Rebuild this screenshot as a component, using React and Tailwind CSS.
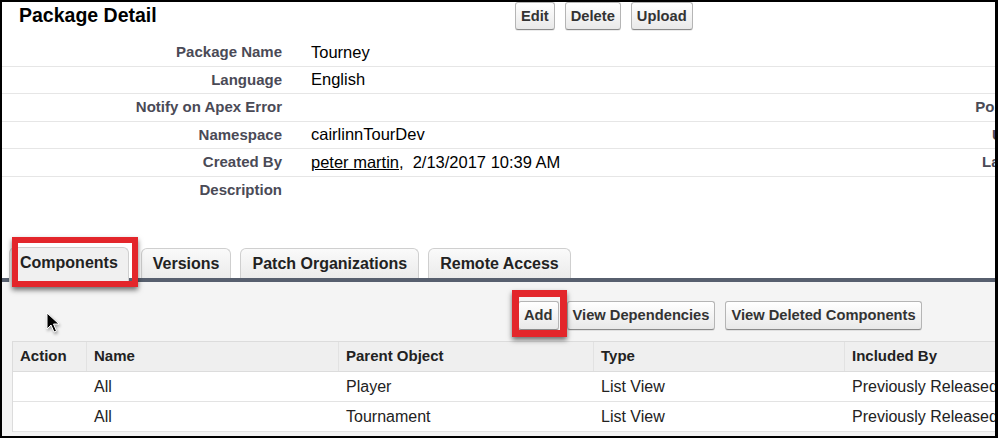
import React from "react";

const btn =
  "h-[28px] px-[5px] border border-[#b5b5b5] border-b-[#8a8a8a] rounded-[3px] bg-linear-to-b from-white to-[#e9e9e9] text-[14.7px] font-bold text-[#333] flex items-center whitespace-nowrap shadow-[0_1px_0_rgba(0,0,0,0.08)]";

const tab =
  "h-[30px] px-[10px] border border-b-0 border-[#cfcfcf] rounded-t-[6px] bg-linear-to-b from-[#fafafa] to-[#ebebeb] text-[16px] font-bold text-[#222] flex items-center whitespace-nowrap";

function Row({ label, value, right, last }) {
  return (
    <div
      className={`flex items-center h-[27.5px] overflow-hidden shrink-0 ${
        last ? "" : "border-b border-[#e6e6e6]"
      }`}
    >
      <div className="w-[280px] shrink-0 text-right text-[15px] font-bold text-[#4a4a56] whitespace-nowrap">
        {label}
      </div>
      <div className="w-[618px] shrink-0 pl-[29px] text-[16.5px] text-black whitespace-nowrap">
        {value}
      </div>
      <div className="w-[202px] shrink-0 text-right text-[15px] font-bold text-[#4a4a56] whitespace-nowrap">
        {right}
      </div>
    </div>
  );
}

export default function App() {
  const rows = [
    { label: "Package Name", value: "Tourney" },
    { label: "Language", value: "English" },
    { label: "Notify on Apex Error", value: "", right: "Post Install Script" },
    { label: "Namespace", value: "cairlinnTourDev", right: "Uninstall Script" },
    {
      label: "Created By",
      value: (
        <span>
          <span className="underline">peter martin</span>,
          <span className="ml-[9px]">2/13/2017 10:39 AM</span>
        </span>
      ),
      right: "Last Modified By",
    },
    { label: "Description", value: "" },
  ];

  const cols = [
    { name: "Action", w: "w-[73px]" },
    { name: "Name", w: "w-[252px]" },
    { name: "Parent Object", w: "w-[255px]" },
    { name: "Type", w: "w-[251px]" },
    { name: "Included By", w: "w-[200px]" },
  ];
  const data = [
    ["", "All", "Player", "List View", "Previously Released"],
    ["", "All", "Tournament", "List View", "Previously Released"],
  ];

  return (
    <div className="w-[1000px] h-[439px] bg-white relative overflow-hidden font-['Liberation_Sans',Arial,sans-serif]">
      <div className="w-[998px] h-[438px] border-2 border-r-[3px] border-black flex flex-col overflow-hidden">
        {/* header */}
        <div className="flex h-[37px] shrink-0">
          <div className="w-[513px] shrink-0 pl-[17px] h-[28px] flex items-center text-[19.5px] font-bold text-black">
            Package Detail
          </div>
          <div className="flex gap-[10px] items-start">
            <div className={btn}>Edit</div>
            <div className={btn}>Delete</div>
            <div className={btn}>Upload</div>
          </div>
        </div>

        {/* detail rows */}
        <div className="flex flex-col shrink-0">
          {rows.map((r, i) => (
            <Row key={r.label} {...r} last={i === rows.length - 1} />
          ))}
        </div>

        {/* tabs */}
        <div className="mt-[43px] shrink-0 flex items-end pl-[7px] border-b-4 border-[#575f6e] rounded-tl-[4px]">
          <div className={`${tab} relative -mb-[4px] h-[35px] pb-[4px] bg-none bg-[#f0f0f0]`}>Components</div>
          <div className="flex gap-[9px] ml-[12px]">
            <div className={`${tab} px-[11px]`}>Versions</div>
            <div className={`${tab} px-[11px]`}>Patch Organizations</div>
            <div className={`${tab} px-[11px]`}>Remote Access</div>
          </div>
        </div>

        {/* panel */}
        <div className="flex-1 bg-[#f4f4f4] pl-[10px] pt-[19px] flex flex-col">
          <div className="flex pl-[506px] h-[29px]">
            <div className={`${btn} h-[29px]`}>Add</div>
            <div className={`${btn} h-[29px] ml-[8px]`}>View Dependencies</div>
            <div className={`${btn} h-[29px] ml-[10px]`}>View Deleted Components</div>
          </div>
          <div className="mt-[11px] border-l border-t border-[#dcdcdc] flex flex-col">
            <div className="flex h-[30px] bg-[#efefef] border-b border-[#dcdcdc]">
              {cols.map((c, i) => (
                <div
                  key={c.name}
                  className={`${c.w} shrink-0 px-[7px] flex items-center text-[15px] font-bold text-[#222] whitespace-nowrap ${
                    i > 0 ? "border-l border-[#e2e2e2]" : ""
                  }`}
                >
                  {c.name}
                </div>
              ))}
            </div>
            {data.map((r, ri) => (
              <div key={ri} className="flex h-[30px] bg-white border-b border-[#e3e3e3]">
                {r.map((v, i) => (
                  <div
                    key={i}
                    className={`${cols[i].w} shrink-0 px-[7px] flex items-center text-[16px] text-[#222] whitespace-nowrap ${
                      i > 0 ? "pl-[8px]" : ""
                    }`}
                  >
                    {v}
                  </div>
                ))}
              </div>
            ))}
          </div>
        </div>
      </div>

      {/* red annotation boxes */}
      <div className="absolute left-[12px] top-[237px] w-[126px] h-[50px] border-[6px] border-[#e3262b] shadow-[0_3px_5px_rgba(0,0,0,0.55)]" />
      <div className="absolute left-[512px] top-[290px] w-[55px] h-[47px] border-[7px] border-[#e3262b] shadow-[0_3px_5px_rgba(0,0,0,0.55)]" />

      {/* cursor */}
      <svg
        className="absolute left-[46px] top-[312px]"
        width="16"
        height="24"
        viewBox="0 0 16 24"
        style={{ filter: "drop-shadow(1px 2px 1.5px rgba(0,0,0,0.35))" }}
      >
        <path
          d="M1 1 L1 17 L5 13 L8 20 L10.5 19 L7.5 12 L13 12 Z"
          fill="#000"
          stroke="#fff"
          strokeWidth="1"
          strokeLinejoin="round"
        />
      </svg>
    </div>
  );
}
